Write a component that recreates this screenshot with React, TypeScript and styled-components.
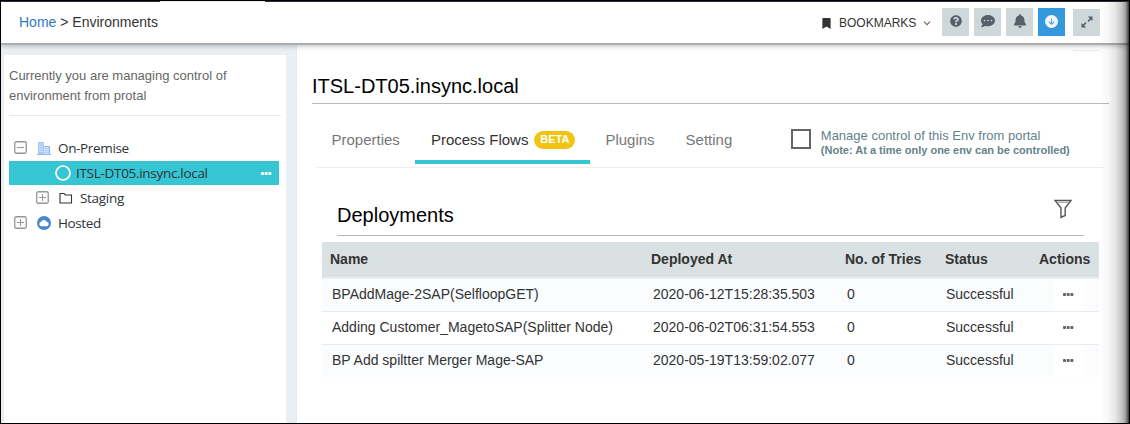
import React from "react";
import styled, { createGlobalStyle } from "styled-components";
import { FaQuestionCircle, FaCommentDots, FaBell, FaBookmark } from "react-icons/fa";
import { BsArrowDownCircleFill } from "react-icons/bs";

const GlobalStyle = createGlobalStyle`
  * { box-sizing: border-box; }
  body { margin: 0; background: #fff; font-family: "Liberation Sans", Arial, sans-serif; }
`;

const Frame = styled.div`
  position: relative;
  width: 1130px;
  height: 424px;
  overflow: hidden;
  border: 1px solid #000;
  background: #ebeff2;
  display: flex;
  flex-direction: column;
`;

const EdgeShade = styled.div`
  position: absolute;
  top: 1px;
  right: 0;
  bottom: 0;
  width: 30px;
  z-index: 3;
  background: linear-gradient(to right, rgba(0,0,0,0) 0, rgba(0,0,0,0.03) 30%, rgba(0,0,0,0.1) 55%, rgba(0,0,0,0.22) 75%, rgba(0,0,0,0.34) 87%, rgba(0,0,0,0.6) 95%, rgba(0,0,0,0.8) 100%);
`;

const TopStrip = styled.div`
  height: 1px;
  flex: none;
  background: linear-gradient(to right, #2b323c 159px, #fff 159px, #fff 264px, #2b323c 264px);
`;

const Header = styled.header`
  position: relative;
  z-index: 2;
  flex: none;
  height: 43px;
  padding: 0 29px 1px 18px;
  display: flex;
  align-items: center;
  background: #fff;
  border-bottom: 2px solid #aaaeb2;
  box-shadow: 0 1px 5px rgba(0, 0, 0, 0.25);
`;

const Crumbs = styled.nav`
  flex: 1;
  font-size: 14px;
  line-height: 16px;
  color: #333;
`;

const CrumbLink = styled.a`
  color: #337ab7;
`;

const Bookmarks = styled.div`
  display: flex;
  align-items: center;
  font-size: 12px;
  line-height: 14px;
  color: #333;
  margin: 2px 6px 0 0;
`;

const BookmarkLabel = styled.span`
  width: 77px;
  margin: 0 7px 0 7px;
`;

const ToolButton = styled.button<{ $active?: boolean; $short?: boolean }>`
  width: 27px;
  height: ${(p) => (p.$short ? 27 : 28)}px;
  margin: ${(p) => (p.$short ? "1px 0 0 8px" : "0 0 0 5px")};
  padding: 0 0 2px;
  border: 0;
  display: flex;
  align-items: center;
  justify-content: center;
  color: ${(p) => (p.$active ? "#f3f6f8" : "#56606b")};
  background: ${(p) => (p.$active ? "#3598dc" : "#ced7da")};
`;

const Body = styled.div`
  flex: 1;
  display: flex;
  min-height: 0;
`;

const Sidebar = styled.aside`
  width: 282px;
  margin: 10px 10px 0 3px;
  padding: 11px 5px 0;
  background: #fff;
  flex: none;
`;

const Notice = styled.p`
  margin: 0;
  height: 50px;
  border-bottom: 1px solid #e9e9e9;
  font-size: 13px;
  line-height: 20px;
  color: #666;
`;

const Tree = styled.div`
  padding-top: 20px;
`;

const TreeRow = styled.div<{ $indent: number; $selected?: boolean }>`
  width: 270px;
  height: ${(p) => (p.$selected ? 24 : 25)}px;
  margin-bottom: ${(p) => (p.$selected ? 1 : 0)}px;
  padding: 0 7px ${(p) => (p.$selected ? 0 : 2)}px ${(p) => p.$indent}px;
  display: flex;
  align-items: center;
  background: ${(p) => (p.$selected ? "#36c6d3" : "transparent")};
`;

const TreeLabel = styled.span<{ $spacing: number; $gap?: number }>`
  flex: 1;
  margin-left: ${(p) => p.$gap ?? 7}px;
  font-family: "Open Sans", "Noto Sans", sans-serif;
  font-size: 13.5px;
  line-height: 20px;
  letter-spacing: ${(p) => p.$spacing}px;
  color: #2e3338;
`;

const Gap = styled.span`
  width: 10px;
  flex: none;
`;

const Main = styled.main`
  flex: 1;
  padding: 0 20px 0 14px;
  background: #fff;
  border-left: 1px solid #e4e9ec;
  display: flex;
  flex-direction: column;
`;

const Tick = styled.div`
  width: 27px;
  height: 1px;
  flex: none;
  align-self: flex-end;
  margin: 5px 9px 0 0;
  background: #eaeaea;
`;

const Title = styled.h1`
  margin: 22px 0 0 1px;
  height: 31px;
  font-size: 20px;
  font-weight: 400;
  line-height: 26px;
  color: #000;
  border-bottom: 1px solid #b9b9b9;
`;

const Tabs = styled.div`
  height: 64px;
  margin: 0 5px 0 5px;
  display: flex;
  align-items: flex-start;
  border-bottom: 1px solid #eee;
`;

const Tab = styled.div<{ $active?: boolean }>`
  height: 60px;
  padding: 24px 15.5px 0;
  display: flex;
  align-items: flex-start;
  font-size: 15px;
  line-height: 24px;
  color: ${(p) => (p.$active ? "#333" : "#777")};
  border-bottom: 4px solid ${(p) => (p.$active ? "#36c6d3" : "transparent")};
`;

const Beta = styled.span`
  width: 41px;
  height: 18px;
  margin: 3px -1px 0 6px;
  border-radius: 9px;
  background: #f1c40f;
  color: #fff;
  font-size: 11px;
  font-weight: 700;
  line-height: 17px;
  text-align: center;
`;

const Control = styled.label`
  display: flex;
  margin: 25px 0 0 43px;
  color: #64838a;
`;

const Box = styled.span`
  width: 20px;
  height: 20px;
  margin-right: 10px;
  border: 2px solid #666;
`;

const ControlText = styled.span`
  margin-top: -1px;
  font-size: 13px;
  line-height: 15px;
  white-space: nowrap;
`;

const ControlNote = styled.strong`
  display: block;
  font-size: 11px;
  line-height: 14px;
`;

const SectionHead = styled.div`
  height: 68px;
  margin: 0 25px 0 26px;
  padding: 31px 12px 0 0;
  display: flex;
  justify-content: space-between;
  border-bottom: 1px solid #b9b9b9;
`;

const SectionTitle = styled.h2`
  margin: 3px 0 0 0;
  font-size: 20px;
  font-weight: 400;
  line-height: 26px;
  color: #000;
`;

const Table = styled.div`
  width: 777px;
  margin: 6px 0 0 11px;
`;

const Row = styled.div<{ $tint?: boolean; $last?: boolean }>`
  display: grid;
  grid-template-columns: 321px 194px 99px 96px 67px;
  height: ${(p) => (p.$last ? 32 : 33)}px;
  padding-left: 10px;
  font-size: 14px;
  line-height: 30px;
  color: #333;
  background: ${(p) => (p.$tint ? "#fafcfe" : "#fff")};
  border-bottom: ${(p) => (p.$last ? 0 : 1)}px solid #e7ecf1;
`;

const HeadRow = styled(Row)`
  grid-template-columns: 321px 194px 100px 94px 68px;
  height: 37px;
  padding-left: 8px;
  line-height: 35px;
  font-weight: 700;
  background: #d9e1e2;
  border-bottom: 2px solid #e7ecf1;
`;

const ActionCell = styled.div`
  width: 31px;
  height: 30px;
  margin: 1px 0 0 11px;
  padding-bottom: 2px;
  background: #fff;
  display: flex;
  align-items: center;
  justify-content: center;
`;

const Toggle = ({ open }: { open?: boolean }) => (
  <svg width="13" height="13" viewBox="0 0 13 13" fill="none" stroke="#969696">
    <rect x="0.75" y="0.75" width="11.5" height="11.5" rx="1.5" strokeWidth="1.3" />
    <path d={open ? "M3 6.5h7" : "M3 6.5h7M6.5 3v7"} />
  </svg>
);

const Buildings = () => (
  <svg width="14" height="14" viewBox="0 0 14 14">
    <path d="M1 1h6v12H1z" fill="#a9c8f8" />
    <path d="M7 5h6v8H7z" fill="#cfe0fb" />
    <path d="M2.5 3h1M4.7 3h1M2.5 5.5h1M4.7 5.5h1M2.5 8h1M4.7 8h1M2.5 10.5h1M4.7 10.5h1" stroke="#fff" />
    <path d="M8.5 7.5h1M10.7 7.5h1M8.5 9.5h1M10.7 9.5h1M8.5 11.5h1M10.7 11.5h1M7 5.5h6M12.5 5v8M0 13.5h14" stroke="#8fb8f6" />
  </svg>
);

const Ring = () => (
  <svg width="16" height="16" viewBox="0 0 16 16">
    <circle cx="8" cy="8" r="7" fill="none" stroke="#fff" strokeWidth="1.7" />
  </svg>
);

const Folder = () => (
  <svg width="14" height="12" viewBox="0 0 14 12">
    <path d="M1 1.5h4l1.400 1.500H12.500v8H1z" fill="none" stroke="#333" strokeWidth="1.1" />
  </svg>
);

const CloudBadge = () => (
  <svg width="14" height="14" viewBox="0 0 14 14">
    <circle cx="7" cy="7" r="7" fill="#4a86cc" />
    <path d="M4.200 10.300a2.200 2.200 0 0 1-.3-4.300A3.200 3.200 0 0 1 9.800 5.700 2.350 2.350 0 0 1 9.900 10.300z" fill="#fff" />
  </svg>
);

const Dots = ({ color }: { color: string }) => (
  <svg width="11" height="3" viewBox="0 0 11 3" fill={color}>
    <rect width="3" height="3" rx="0.8" />
    <rect x="3.700" width="3" height="3" rx="0.8" />
    <rect x="7.400" width="3" height="3" rx="0.8" />
  </svg>
);

const Expand = () => (
  <svg width="12" height="12" viewBox="0 0 12 12">
    <path d="M7 0.500h4.500V5L10 3.500 7.500 6 6.500 5 8.700 2.500zM5 11.500H.5V7L2 8.500 4.500 6l1 1L3.300 9.500z" fill="#56606b" />
  </svg>
);

const Chevron = () => (
  <svg width="8" height="5" viewBox="0 0 8 5">
    <path d="M1 .7l3 3 3-3" fill="none" stroke="#666" strokeWidth="1.100" />
  </svg>
);

const Funnel = () => (
  <svg width="18" height="20" viewBox="0 0 18 20">
    <path d="M1 1.500h16L11.200 9v7.500L7 18.500V9z" fill="none" stroke="#555" strokeWidth="1.400" />
    <path d="M3 3.500h12" stroke="#aaa" />
  </svg>
);

const deployments = [
  { name: "BPAddMage-2SAP(SelfloopGET)", at: "2020-06-12T15:28:35.503" },
  { name: "Adding Customer_MagetoSAP(Splitter Node)", at: "2020-06-02T06:31:54.553" },
  { name: "BP Add spiltter Merger Mage-SAP", at: "2020-05-19T13:59:02.077" },
];

export default function App() {
  return (
    <Frame>
      <GlobalStyle />
      <TopStrip />
      <Header>
        <Crumbs>
          <CrumbLink>Home</CrumbLink> &gt; Environments
        </Crumbs>
        <Bookmarks>
          <FaBookmark size={11} />
          <BookmarkLabel>BOOKMARKS</BookmarkLabel>
          <Chevron />
        </Bookmarks>
        <ToolButton><FaQuestionCircle size={12} /></ToolButton>
        <ToolButton><FaCommentDots size={14} /></ToolButton>
        <ToolButton><FaBell size={14} /></ToolButton>
        <ToolButton $active><BsArrowDownCircleFill size={13} /></ToolButton>
        <ToolButton $short><Expand /></ToolButton>
      </Header>
      <Body>
        <Sidebar>
          <Notice>
            Currently you are managing control of
            <br />
            environment from protal
          </Notice>
          <Tree>
            <TreeRow $indent={5}>
              <Toggle open /><Gap /><Buildings />
              <TreeLabel $spacing={-0.35}>On-Premise</TreeLabel>
            </TreeRow>
            <TreeRow $indent={46} $selected>
              <Ring />
              <TreeLabel $spacing={-0.3} $gap={5}>ITSL-DT05.insync.local</TreeLabel>
              <Dots color="#fff" />
            </TreeRow>
            <TreeRow $indent={27}>
              <Toggle /><Gap /><Folder />
              <TreeLabel $spacing={-0.3}>Staging</TreeLabel>
            </TreeRow>
            <TreeRow $indent={5}>
              <Toggle /><Gap /><CloudBadge />
              <TreeLabel $spacing={-0.4}>Hosted</TreeLabel>
            </TreeRow>
          </Tree>
        </Sidebar>
        <Main>
          <Tick />
          <Title>ITSL-DT05.insync.local</Title>
          <Tabs>
            <Tab>Properties</Tab>
            <Tab $active>Process Flows<Beta>BETA</Beta></Tab>
            <Tab>Plugins</Tab>
            <Tab>Setting</Tab>
            <Control>
              <Box />
              <ControlText>
                Manage control of this Env from portal
                <ControlNote>(Note: At a time only one env can be controlled)</ControlNote>
              </ControlText>
            </Control>
          </Tabs>
          <SectionHead>
            <SectionTitle>Deployments</SectionTitle>
            <Funnel />
          </SectionHead>
          <Table>
            <HeadRow>
              <span>Name</span>
              <span>Deployed At</span>
              <span>No. of Tries</span>
              <span>Status</span>
              <span>Actions</span>
            </HeadRow>
            {deployments.map((d, i) => (
              <Row key={d.name} $tint={i % 2 === 0} $last={i === deployments.length - 1}>
                <span>{d.name}</span>
                <span>{d.at}</span>
                <span>0</span>
                <span>Successful</span>
                <ActionCell><Dots color="#666" /></ActionCell>
              </Row>
            ))}
          </Table>
        </Main>
      </Body>
      <EdgeShade />
    </Frame>
  );
}
